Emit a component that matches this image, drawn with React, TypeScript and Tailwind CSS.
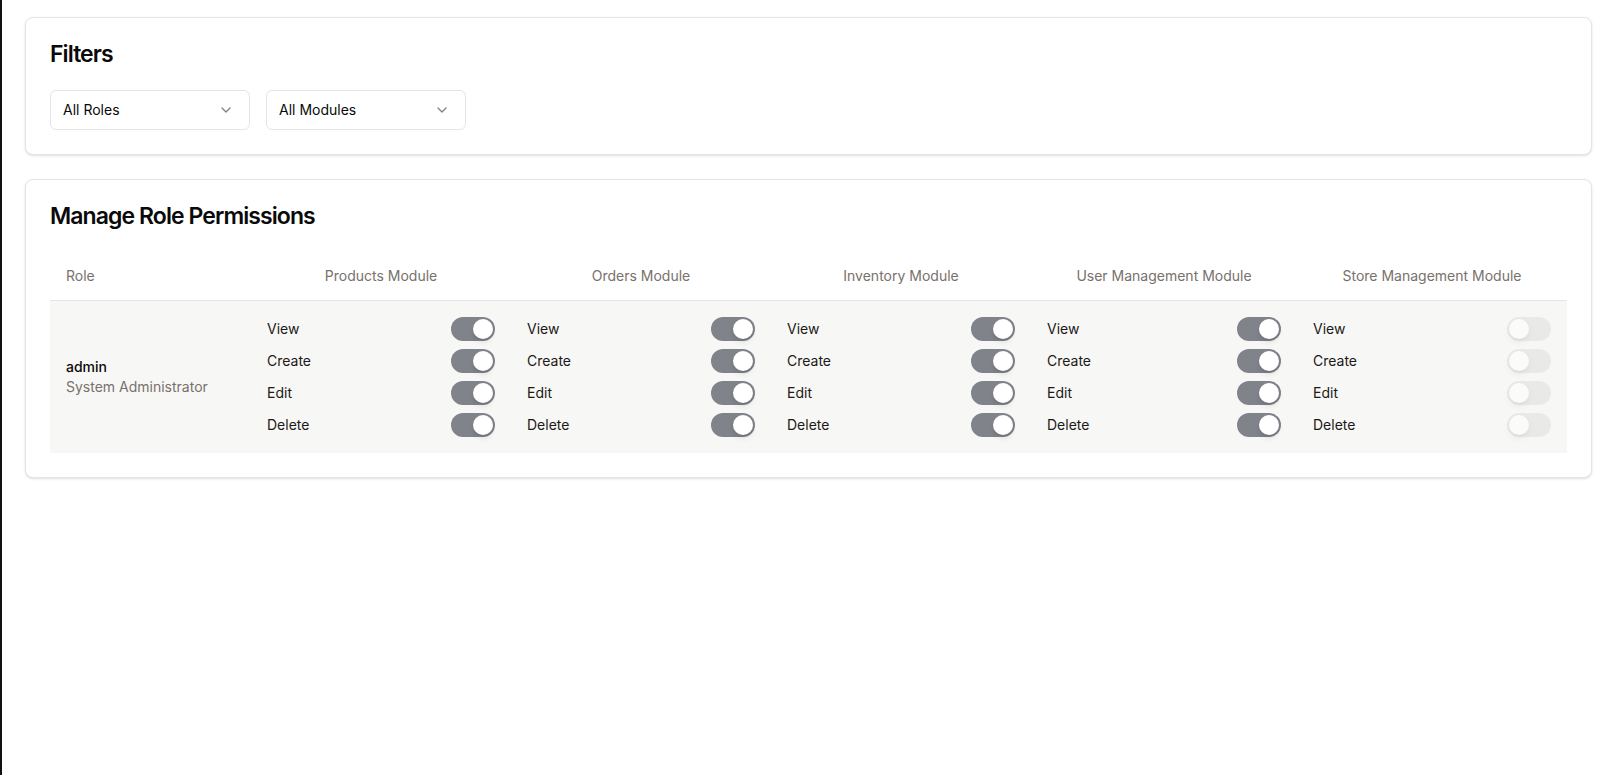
import { useState } from 'react';
import { ChevronDown } from 'lucide-react';

const modules = [
  { name: 'Products Module', width: 'w-[260px]', enabled: true },
  { name: 'Orders Module', width: 'w-[260px]', enabled: true },
  { name: 'Inventory Module', width: 'w-[260px]', enabled: true },
  { name: 'User Management Module', width: 'w-[266px]', enabled: true },
  { name: 'Store Management Module', width: '', enabled: false },
];

const actions = ['View', 'Create', 'Edit', 'Delete'];

const Toggle = ({ checked, disabled }: { checked: boolean; disabled?: boolean }) => {
  const [on, setOn] = useState(checked);
  return (
    <button
      role="switch"
      aria-checked={on}
      disabled={disabled}
      onClick={() => setOn(!on)}
      className={`inline-flex h-6 w-11 shrink-0 items-center rounded-full border-2 border-transparent transition-colors ${
        on ? 'bg-[#80838a]' : 'bg-[#dcdcda]'
      } ${disabled ? 'opacity-50 cursor-not-allowed' : 'cursor-pointer'}`}
    >
      <span
        className={`block h-5 w-5 rounded-full bg-white shadow-md transition-transform ${
          on ? 'translate-x-5' : 'translate-x-0'
        }`}
      />
    </button>
  );
};

const SelectBox = ({ label }: { label: string }) => (
  <button className="flex h-10 w-[200px] items-center justify-between rounded-md border border-[#e5e5e5] bg-white pl-3 pr-[15px] text-sm text-[#0a0a0a]">
    <span>{label}</span>
    <ChevronDown className="h-4 w-4 opacity-50" />
  </button>
);

export default function App() {
  return (
    <div className="flex min-h-screen bg-white text-[#0a0a0a]" style={{ fontFamily: 'Inter, "Noto Sans", sans-serif' }}>
      <div className="w-[2px] shrink-0 bg-[#111111]" />
      <main className="flex-1 pl-[23px] pr-[17px] pt-[17px] space-y-6">
        <section className="rounded-lg border border-[#e5e5e5] bg-white shadow-sm">
          <div className="p-6">
            <h2 className="text-[23px] font-semibold leading-6 tracking-[-0.04em]">Filters</h2>
          </div>
          <div className="flex gap-4 px-6 pb-6">
            <SelectBox label="All Roles" />
            <SelectBox label="All Modules" />
          </div>
        </section>

        <section className="rounded-lg border border-[#e5e5e5] bg-white shadow-sm">
          <div className="p-6">
            <h2 className="text-[23px] font-semibold leading-6 tracking-[-0.04em]">Manage Role Permissions</h2>
          </div>
          <div className="px-6 pb-6">
            <table className="w-full table-fixed text-sm">
              <colgroup>
                <col className="w-[201px]" />
                {modules.map(m => (
                  <col key={m.name} className={m.width} />
                ))}
              </colgroup>
              <thead>
                <tr className="border-b border-[#e7e5e4]">
                  <th className="h-12 px-4 text-left align-middle font-normal text-[#78716c]">Role</th>
                  {modules.map(m => (
                    <th key={m.name} className="h-12 px-4 text-center align-middle font-normal text-[#78716c]">
                      {m.name}
                    </th>
                  ))}
                </tr>
              </thead>
              <tbody>
                <tr className="bg-[#f7f7f6]">
                  <td className="p-4 align-middle">
                    <div className="font-medium text-[#0c0a09]">admin</div>
                    <div className="text-[#78716c]">System Administrator</div>
                  </td>
                  {modules.map(m => (
                    <td key={m.name} className="p-4 align-middle">
                      <div className="flex flex-col gap-2">
                        {actions.map(a => (
                          <div key={a} className="flex items-center justify-between">
                            <span className="text-[#1c1917]">{a}</span>
                            <Toggle checked={m.enabled} disabled={!m.enabled} />
                          </div>
                        ))}
                      </div>
                    </td>
                  ))}
                </tr>
              </tbody>
            </table>
          </div>
        </section>
      </main>
    </div>
  );
}
